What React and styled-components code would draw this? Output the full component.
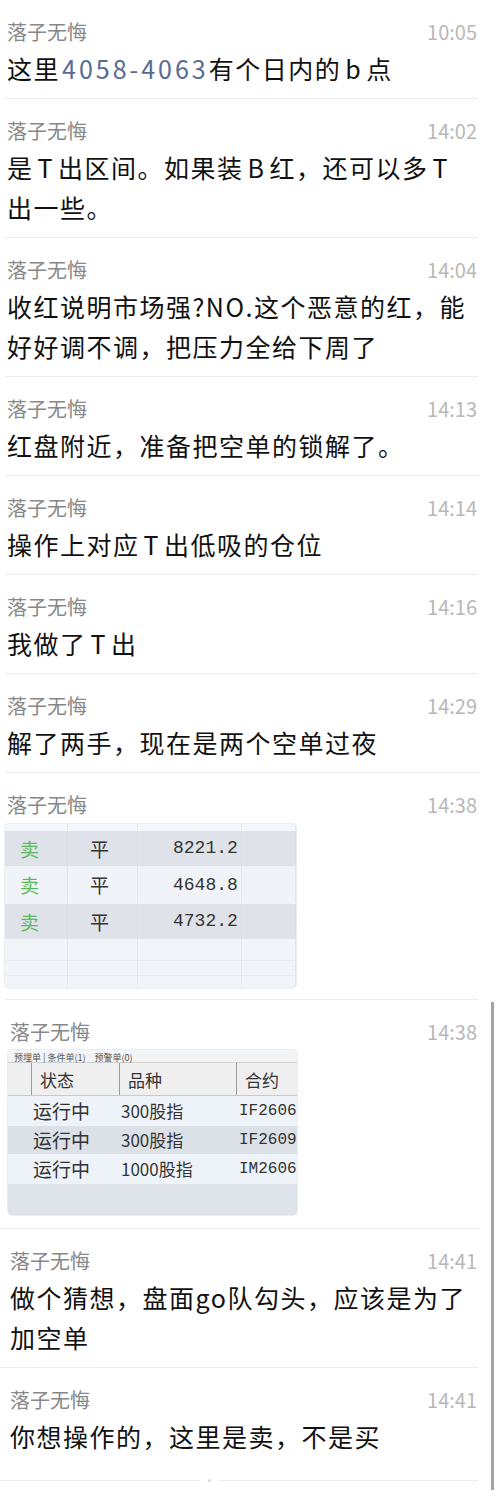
import React from 'react';
import styled, { createGlobalStyle } from 'styled-components';

const GlobalStyle = createGlobalStyle`
  html, body {
    margin: 0;
    padding: 0;
    background: #fff;
  }
  body {
    font-family: "Noto Sans CJK SC", "Noto Sans", sans-serif;
  }
`

const Page = styled.div`
  position: relative;
  width: 500px;
  height: 1498px;
  overflow: hidden;
  background: #fff;
`

const List = styled.div`
  display: flex;
  flex-direction: column;
  width: 478px;
`

const Item = styled.div`
  display: flex;
  flex-direction: column;
  margin-left: ${p => (p.$shift ? 0 : 5)}px;
  padding: 19px 1px ${p => p.$pb}px ${p => (p.$shift ? 10 : 2)}px;
  border-bottom: 1px solid ${p => (p.$bare ? 'transparent' : '#ececec')};
`

const Head = styled.div`
  display: flex;
  justify-content: space-between;
  align-items: center;
  height: 26px;
`

const Name = styled.span`
  font-size: 20px;
  line-height: 26px;
  color: #888;
`

const Time = styled.span`
  font-size: 20px;
  line-height: 26px;
  color: #b8b8b8;
`

const Body = styled.div`
  margin-top: 3px;
  font-size: 25px;
  line-height: 40px;
  letter-spacing: 1.5px;
  color: #111;
  white-space: nowrap;
`

const Link = styled.span`
  color: #576b95;
  letter-spacing: 3px;
  margin-left: 2px;
`

const Latin = styled.span`
  margin: 0 4px;
`

const Shot = styled.div`
  display: flex;
  flex-direction: column;
  width: ${p => p.$w}px;
  margin: ${p => p.$mt}px 0 0 -2px;
  border-radius: 4px;
  overflow: hidden;
  background: #f2f5fa;
  box-shadow: 0 0 0 1px rgba(220, 226, 234, 0.6);
`

const Row = styled.div`
  display: grid;
  grid-template-columns: ${p => p.$cols};
  height: ${p => p.$h}px;
  background: ${p => p.$bg};
  border-bottom: 1px solid ${p => p.$line || 'transparent'};
  box-sizing: border-box;
`

const Cell = styled.div`
  display: flex;
  align-items: center;
  padding-left: ${p => p.$pl || 0}px;
  border-right: 1px solid ${p => p.$sep || 'rgba(205, 214, 226, 0.45)'};
  font-family: ${p => (p.$mono ? '"Liberation Mono", monospace' : '"Noto Sans CJK SC", sans-serif')};
  font-size: ${p => p.$fs || 19}px;
  color: ${p => p.$color || '#333'};
  white-space: nowrap;
  overflow: hidden;
`

const TabStrip = styled.div`
  display: flex;
  align-items: center;
  height: 9px;
  margin-top: 3px;
  padding-left: 6px;
  background: #f3f3f3;
  border-bottom: 1px solid #cfcfcf;
  font-size: 9px;
  line-height: 9px;
  color: #555;
  white-space: nowrap;
`

const FooterRule = styled.div`
  display: flex;
  align-items: center;
  width: 478px;
  height: 1px;
  margin-top: 13px;
`

const RuleLine = styled.span`
  flex: ${p => (p.$grow ? 1 : 'none')};
  width: ${p => p.$w || 0}px;
  height: 1px;
  background: #ececec;
`

const RuleDot = styled.span`
  width: 3px;
  height: 3px;
  margin: 0 8px;
  border-radius: 50%;
  background: #d6d6d6;
`

const ScrollBar = styled.div`
  position: absolute;
  left: 491px;
  top: 1002px;
  width: 3px;
  height: 488px;
  background: #a4a4a4;
`

const NAME = '落子无悔'

const orders = [
  { bg: '#dfe3e9', h: 35, price: '8221.2' },
  { bg: '#f0f4f9', h: 38, price: '4648.8' },
  { bg: '#dfe3e9', h: 35, price: '4732.2' },
]

const orderCols = '63px 70px 104px 54px'

function OrderShot() {
  return (
    <Shot $w={291} $mt={6}>
      <Row $cols={orderCols} $h={7} $bg="#f3f6fa">
        <Cell /><Cell /><Cell /><Cell />
      </Row>
      {orders.map(o => (
        <Row key={o.price} $cols={orderCols} $h={o.h} $bg={o.bg}>
          <Cell $pl={15} $color="#5cb85c">卖</Cell>
          <Cell $pl={22}>平</Cell>
          <Cell $pl={35} $mono $fs={18}>{o.price}</Cell>
          <Cell />
        </Row>
      ))}
      {[22, 15, 12].map((h, i) => (
        <Row key={i} $cols={orderCols} $h={h} $bg="#f1f5fa" $line={i < 2 ? '#e6ebf2' : ''}>
          <Cell /><Cell /><Cell /><Cell />
        </Row>
      ))}
    </Shot>
  )
}

const tasks = [
  { bg: '#eef3fa', h: 30, kind: '300股指', code: 'IF2606' },
  { bg: '#dce1e7', h: 28, kind: '300股指', code: 'IF2609' },
  { bg: '#eef3fa', h: 30, kind: '1000股指', code: 'IM2606' },
]

const taskCols = '24px 88px 117px 60px'

function TaskShot() {
  return (
    <Shot $w={289} $mt={5}>
      <TabStrip>预埋单 | 条件单(1)　预警单(0)</TabStrip>
      <Row $cols={taskCols} $h={33} $bg="#efefef" $line="#c9c9c9">
        <Cell $sep="#9c9c9c" />
        <Cell $pl={8} $fs={17} $sep="#9c9c9c">状态</Cell>
        <Cell $pl={8} $fs={17} $sep="#9c9c9c">品种</Cell>
        <Cell $pl={8} $fs={17} $sep="transparent">合约</Cell>
      </Row>
      {tasks.map(t => (
        <Row key={t.code} $cols={taskCols} $h={t.h} $bg={t.bg}>
          <Cell $sep="transparent" />
          <Cell $pl={1} $fs={19} $sep="transparent">运行中</Cell>
          <Cell $pl={1} $fs={17} $sep="transparent">{t.kind}</Cell>
          <Cell $pl={2} $mono $fs={16} $sep="transparent">{t.code}</Cell>
        </Row>
      ))}
      <Row $cols={taskCols} $h={31} $bg="#dfe4ea">
        <Cell $sep="transparent" /><Cell $sep="transparent" /><Cell $sep="transparent" /><Cell $sep="transparent" />
      </Row>
    </Shot>
  )
}

function Message({ time, shift, pb = 10, bare, children }) {
  return (
    <Item $shift={shift} $pb={pb} $bare={bare}>
      <Head>
        <Name>{NAME}</Name>
        <Time>{time}</Time>
      </Head>
      {children}
    </Item>
  )
}

export default function App() {
  return (
    <Page>
      <GlobalStyle />
      <List>
        <Message time="10:05">
          <Body>这里<Link>4058-4063</Link>有个日内的<Latin>b</Latin>点</Body>
        </Message>
        <Message time="14:02">
          <Body>是<Latin>T</Latin>出区间。如果装<Latin>B</Latin>红，还可以多<Latin>T</Latin><br />出一些。</Body>
        </Message>
        <Message time="14:04">
          <Body>收红说明市场强?NO.这个恶意的红，能<br />好好调不调，把压力全给下周了</Body>
        </Message>
        <Message time="14:13">
          <Body>红盘附近，准备把空单的锁解了。</Body>
        </Message>
        <Message time="14:14">
          <Body>操作上对应<Latin>T</Latin>出低吸的仓位</Body>
        </Message>
        <Message time="14:16">
          <Body>我做了<Latin>T</Latin>出</Body>
        </Message>
        <Message time="14:29">
          <Body>解了两手，现在是两个空单过夜</Body>
        </Message>
        <Message time="14:38" pb={11}>
          <OrderShot />
        </Message>
        <Message time="14:38" shift pb={13}>
          <TaskShot />
        </Message>
        <Message time="14:41" shift>
          <Body>做个猜想，盘面go队勾头，应该是为了<br />加空单</Body>
        </Message>
        <Message time="14:41" shift bare>
          <Body>你想操作的，这里是卖，不是买</Body>
        </Message>
        <FooterRule>
          <RuleLine $w={200} />
          <RuleDot />
          <RuleLine $grow />
        </FooterRule>
      </List>
      <ScrollBar />
    </Page>
  )
}
